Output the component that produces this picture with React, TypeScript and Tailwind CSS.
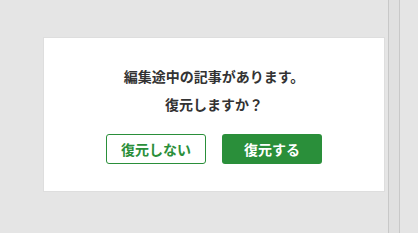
export default function App() {
  return (
    <div
      className="flex h-[233px] w-[418px] bg-[#e5e5e5] text-[#333]"
      style={{ fontFamily: '"Noto Sans CJK JP", "Noto Sans", sans-serif' }}
    >
      <div className="w-[388px] pl-[43px] pr-[3px] pt-[37px]">
        <div className="flex h-[155px] w-[342px] flex-col items-center border border-[#dedede] bg-white pt-[24px]">
          <p className="text-[14px] font-bold leading-[28px]">編集途中の記事があります。</p>
          <p className="text-[14px] font-bold leading-[28px]">復元しますか？</p>
          <div className="mt-[16px] flex gap-[16px]">
            <button className="h-[30px] w-[100px] rounded-[3px] border border-[#2a8f3a] bg-white text-[14px] font-bold text-[#2a8f3a]">
              復元しない
            </button>
            <button className="h-[30px] w-[100px] rounded-[3px] bg-[#2a8f3a] text-[14px] font-bold text-white">
              復元する
            </button>
          </div>
        </div>
      </div>
      <div className="w-[12px] border-x border-[#c8c8c8] bg-[#e0e0e0]" />
      <div className="flex-1" />
    </div>
  );
}
